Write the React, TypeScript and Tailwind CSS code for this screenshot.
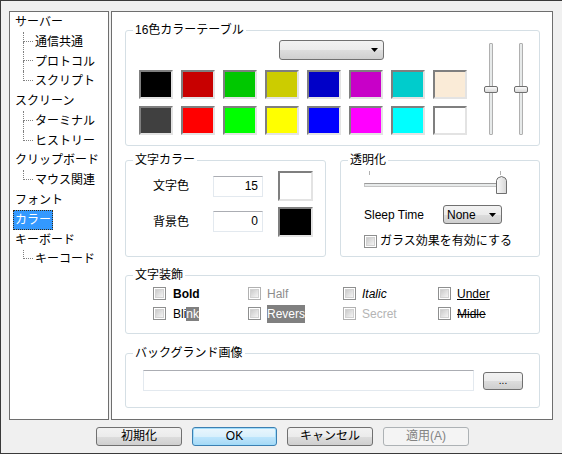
import React from 'react';

const row1 = ['#000000', '#c80000', '#00c800', '#cccc00', '#0000c8', '#c800c8', '#00cccc', '#faebd7'];
const row2 = ['#404040', '#ff0000', '#00ff00', '#ffff00', '#0000ff', '#ff00ff', '#00ffff', '#ffffff'];

type TreeItem = { label: string; child?: boolean; last?: boolean; selected?: boolean };

const tree: TreeItem[] = [
  { label: 'サーバー' },
  { label: '通信共通', child: true },
  { label: 'プロトコル', child: true },
  { label: 'スクリプト', child: true, last: true },
  { label: 'スクリーン' },
  { label: 'ターミナル', child: true },
  { label: 'ヒストリー', child: true, last: true },
  { label: 'クリップボード' },
  { label: 'マウス関連', child: true, last: true },
  { label: 'フォント' },
  { label: 'カラー', selected: true },
  { label: 'キーボード' },
  { label: 'キーコード', child: true, last: true },
];

function Group({ title, className, children }: { title: string; className?: string; children: React.ReactNode }) {
  return (
    <fieldset className={`border border-[#d5dfe5] rounded-[3px] ${className ?? ''}`}>
      <legend className="ml-[7px] px-[2px] text-[12px] leading-[14px] text-black">{title}</legend>
      {children}
    </fieldset>
  );
}

function CheckBox({ disabled }: { disabled?: boolean }) {
  return (
    <span
      className={`flex h-[13px] w-[13px] shrink-0 items-center justify-center border bg-white ${
        disabled ? 'border-[#b1b1b1]' : 'border-[#8e8f8f]'
      }`}
    >
      <span className="h-[9px] w-[9px] bg-[linear-gradient(135deg,#cbcbcb,#f4f4f4)] border border-[#d2d2d2]" />
    </span>
  );
}

function Arrow() {
  return (
    <svg width="7" height="4" viewBox="0 0 7 4" aria-hidden="true">
      <path d="M0 0h7L3.5 4z" fill="#000" />
    </svg>
  );
}

function Swatch({ color }: { color: string }) {
  return (
    <div
      className="h-[29px] w-[34px] border-2 border-t-[#7f7f7f] border-l-[#7f7f7f] border-b-[#e3e3e3] border-r-[#e3e3e3]"
      style={{ backgroundColor: color }}
    />
  );
}

function VSlider() {
  return (
    <div className="relative flex h-[92px] w-[16px] justify-center">
      <div className="h-full w-[4px] rounded-[1px] border border-[#b0b0b0] bg-[#e7eaea]" />
      <div className="absolute left-[1px] top-[43px] h-[7px] w-[14px] rounded-[2px] border border-[#6f6f6f] bg-[linear-gradient(#fafafa,#d9d9d9)]" />
    </div>
  );
}

function Btn({ children, kind }: { children: React.ReactNode; kind?: 'default' | 'disabled' }) {
  if (kind === 'disabled') {
    return (
      <button className="h-[19px] w-[86px] rounded-[3px] border border-[#adb2b5] bg-[#f4f4f4] text-[12px] leading-[17px] text-[#838383]">
        {children}
      </button>
    );
  }
  if (kind === 'default') {
    return (
      <button className="h-[19px] w-[85px] rounded-[3px] border border-[#3c7fb1] bg-[linear-gradient(#eaf6fd,#d9f0fc_50%,#bee6fd_50%,#a7d9f5)] shadow-[inset_0_0_0_1px_#9fdcfb] text-[12px] leading-[17px] text-black">
        {children}
      </button>
    );
  }
  return (
    <button className="h-[19px] w-[86px] rounded-[3px] border border-[#707070] bg-[linear-gradient(#f2f2f2,#ebebeb_50%,#dddddd_50%,#cfcfcf)] text-[12px] leading-[17px] text-black">
      {children}
    </button>
  );
}

export default function App() {
  return (
    <div
      className="flex h-[454px] w-[562px] flex-col border-l border-t border-b border-[#3a3a3a] bg-[#f0f0f0] pl-[8px] pt-[10px] text-[12px] text-black"
      style={{ fontFamily: '"Liberation Sans", "Noto Sans CJK JP", sans-serif' }}
    >
      <div className="flex gap-[2px]">
        {/* tree */}
        <div className="h-[409px] w-[100px] border border-[#6e6e6e] bg-white py-[0px]">
          {tree.map((it) => (
            <div key={it.label} className="flex h-[19.8px] items-stretch">
              {it.child ? (
                <>
                  <div className="w-[13px] shrink-0" />
                  <div className="flex w-[10px] shrink-0 flex-col">
                    <div className="h-1/2 border-b border-l border-dotted border-[#808080]" />
                    <div className={`flex-1 ${it.last ? '' : 'border-l border-dotted border-[#808080]'}`} />
                  </div>
                </>
              ) : (
                <div className="w-[3px] shrink-0" />
              )}
              <span
                className={`flex items-center border px-[1px] leading-[18px] ${
                  it.selected
                    ? 'border-dotted border-[#3a2a10] bg-[#3399ff] text-white'
                    : 'border-transparent'
                }`}
              >
                {it.label}
              </span>
            </div>
          ))}
        </div>

        {/* settings panel */}
        <div className="flex h-[409px] w-[442px] flex-col border border-[#6e6e6e] bg-white pl-[13px] pt-[11px]">
          <Group title="16色カラーテーブル" className="w-[415px]">
            <div className="flex pb-[10px] pl-[13px]">
              <div className="flex flex-col">
                <div className="ml-[140px] mt-[3px] flex h-[20px] w-[105px] items-center justify-end rounded-[3px] border border-[#707070] bg-[linear-gradient(#f2f2f2,#ebebeb_50%,#dddddd_50%,#cfcfcf)] pr-[5px]">
                  <Arrow />
                </div>
                <div className="mt-[10px] flex flex-col gap-[7px]">
                  <div className="flex gap-[8px]">
                    {row1.map((c) => (
                      <Swatch key={c} color={c} />
                    ))}
                  </div>
                  <div className="flex gap-[8px]">
                    {row2.map((c) => (
                      <Swatch key={c} color={c} />
                    ))}
                  </div>
                </div>
              </div>
              <div className="ml-[16px] mt-[6px] flex gap-[14px]">
                <VSlider />
                <VSlider />
              </div>
            </div>
          </Group>

          <div className="mt-[7px] flex gap-[14px]">
            <Group title="文字カラー" className="w-[201px]">
              <div className="flex flex-col gap-[6px] pb-[19px] pl-[27px] pt-[4px]">
                <div className="flex h-[30px] items-center">
                  <span className="w-[60px]">文字色</span>
                  <div className="h-[21px] w-[50px] border border-[#e3e9ef] border-t-[#abadb3] pr-[4px] text-right leading-[19px]">15</div>
                  <div className="ml-[15px] h-[30px] w-[35px] border-2 border-t-[#7f7f7f] border-l-[#7f7f7f] border-b-[#e3e3e3] border-r-[#e3e3e3] bg-white" />
                </div>
                <div className="flex h-[30px] items-center">
                  <span className="w-[60px]">背景色</span>
                  <div className="mt-[-2px] h-[21px] w-[50px] border border-[#e3e9ef] border-t-[#abadb3] pr-[4px] text-right leading-[19px]">0</div>
                  <div className="ml-[15px] h-[30px] w-[35px] border-2 border-t-[#7f7f7f] border-l-[#7f7f7f] border-b-[#e3e3e3] border-r-[#e3e3e3] bg-black" />
                </div>
              </div>
            </Group>

            <Group title="透明化" className="w-[200px]">
              <div className="flex flex-col pb-[8px] pl-[23px] pt-[1px]">
                <div className="relative h-[26px] w-[143px]">
                  <div className="absolute left-[5px] top-[3px] h-[4px] w-px bg-[#b0b0b0]" />
                  <div className="absolute left-[136px] top-[3px] h-[4px] w-px bg-[#b0b0b0]" />
                  <div className="absolute left-0 top-[15px] h-[4px] w-[140px] border border-[#c4c4c4] border-t-[#9a9a9a] bg-[#e7eaea]" />
                  <svg className="absolute left-[132px] top-[8px]" width="11" height="18" viewBox="0 0 11 18" aria-hidden="true">
                    <defs>
                      <linearGradient id="thumb" x1="0" x2="1" y1="0" y2="0">
                        <stop offset="0" stopColor="#fafafa" />
                        <stop offset="1" stopColor="#d6d6d6" />
                      </linearGradient>
                    </defs>
                    <path d="M0.5 17.5V4.5Q0.5 1.5 5.5 0.5Q10.5 1.5 10.5 4.5V17.5Z" fill="url(#thumb)" stroke="#6f6f6f" />
                  </svg>
                </div>
                <div className="mt-[11px] flex h-[19px] items-center">
                  <span className="w-[79px]">Sleep Time</span>
                  <div className="flex h-[19px] w-[59px] items-center justify-between rounded-[3px] border border-[#707070] bg-[linear-gradient(#f2f2f2,#ebebeb_50%,#dddddd_50%,#cfcfcf)] pl-[3px] pr-[5px]">
                    <span>None</span>
                    <Arrow />
                  </div>
                </div>
                <div className="mt-[11px] flex h-[13px] items-center gap-[3px]">
                  <CheckBox />
                  <span className="leading-[13px]">ガラス効果を有効にする</span>
                </div>
              </div>
            </Group>
          </div>

          <Group title="文字装飾" className="mt-[11px] w-[415px]">
            <div className="grid grid-cols-[95px_95px_95px_95px] gap-y-[7px] pb-[13px] pl-[27px] pt-[5px]">
              <div className="flex h-[13px] items-center gap-[7px]">
                <CheckBox />
                <span className="font-bold">Bold</span>
              </div>
              <div className="flex h-[13px] items-center gap-[6px]">
                <CheckBox disabled />
                <span className="text-[#8d8d8d]">Half</span>
              </div>
              <div className="flex h-[13px] items-center gap-[6px]">
                <CheckBox />
                <span className="italic">Italic</span>
              </div>
              <div className="flex h-[13px] items-center gap-[6px]">
                <CheckBox />
                <span className="underline">Under</span>
              </div>
              <div className="flex h-[13px] items-center gap-[7px]">
                <CheckBox />
                <span>
                  Bli<span className="bg-[#808080] text-white">nk</span>
                </span>
              </div>
              <div className="flex h-[13px] items-center gap-[6px]">
                <CheckBox />
                <span className="bg-[#808080] text-white">Revers</span>
              </div>
              <div className="flex h-[13px] items-center gap-[6px]">
                <CheckBox disabled />
                <span className="text-[#b4b4b4]">Secret</span>
              </div>
              <div className="flex h-[13px] items-center gap-[6px]">
                <CheckBox />
                <span className="line-through">Midle</span>
              </div>
            </div>
          </Group>

          <Group title="バックグランド画像" className="mt-[12px] w-[415px]">
            <div className="flex items-center pb-[16px] pl-[17px] pt-[10px]">
              <div className="h-[21px] w-[331px] border border-[#e3e9ef] border-t-[#abadb3] bg-white" />
              <div className="ml-[9px] flex h-[18px] w-[40px] items-center justify-center rounded-[3px] border border-[#707070] bg-[linear-gradient(#f2f2f2,#ebebeb_50%,#dddddd_50%,#cfcfcf)] text-[10px] leading-[10px]">
                ...
              </div>
            </div>
          </Group>
        </div>
      </div>

      <div className="mt-[7px] flex gap-[10px] pl-[87px]">
        <Btn>初期化</Btn>
        <Btn kind="default">OK</Btn>
        <Btn>キャンセル</Btn>
        <Btn kind="disabled">適用(A)</Btn>
      </div>
    </div>
  );
}
